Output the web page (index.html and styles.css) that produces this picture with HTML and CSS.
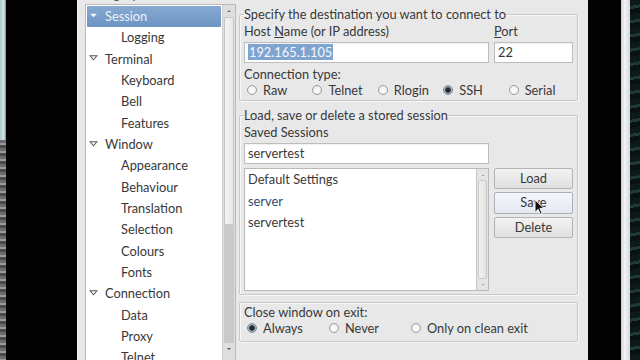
FILE: index.html
```html
<!DOCTYPE html>
<html>
<head>
<meta charset="utf-8">
<link rel="stylesheet" href="styles.css">
</head>
<body>
<div class="screen">
  <div class="desk-left"><div class="desk-left-top"></div><div class="desk-left-bottom"></div></div>
  <div class="black-gap left"></div>
  <div class="window">
    <div class="left-col">
      <div class="cat-label">Category:</div>
      <div class="tree">
        <ul class="tree-list">
          <li class="row top sel"><svg class="exp" viewBox="0 0 8 8"><path d="M1 2.5 L7 2.5 L4 5.5 Z" fill="#f4f7fb"/></svg>Session</li>
          <li class="row child">Logging</li>
          <li class="row top"><svg class="exp" viewBox="0 0 8 8"><path d="M1 2.5 L7 2.5 L4 6 Z" fill="none" stroke="#555" stroke-width="0.9"/></svg>Terminal</li>
          <li class="row child">Keyboard</li>
          <li class="row child">Bell</li>
          <li class="row child">Features</li>
          <li class="row top"><svg class="exp" viewBox="0 0 8 8"><path d="M1 2.5 L7 2.5 L4 6 Z" fill="none" stroke="#555" stroke-width="0.9"/></svg>Window</li>
          <li class="row child">Appearance</li>
          <li class="row child">Behaviour</li>
          <li class="row child">Translation</li>
          <li class="row child">Selection</li>
          <li class="row child">Colours</li>
          <li class="row child">Fonts</li>
          <li class="row top"><svg class="exp" viewBox="0 0 8 8"><path d="M1 2.5 L7 2.5 L4 6 Z" fill="none" stroke="#555" stroke-width="0.9"/></svg>Connection</li>
          <li class="row child">Data</li>
          <li class="row child">Proxy</li>
          <li class="row child">Telnet</li>
        </ul>
        <div class="vscroll tree-scroll">
          <div class="sb-arrow"><svg viewBox="0 0 8 8"><path d="M2 5 L6 5 L4 3 Z" fill="#777"/></svg></div>
          <div class="sb-thumb"></div>
          <div class="sb-track"></div>
          <div class="sb-arrow"><svg viewBox="0 0 8 8"><path d="M2 3 L6 3 L4 5 Z" fill="#555"/></svg></div>
        </div>
      </div>
    </div>

    <div class="right-col">
      <fieldset class="frame f1">
        <legend>Specify the destination you want to connect to</legend>
        <div class="host-row">
          <div class="field host">
            <div class="lbl">Host <u>N</u>ame (or IP address)</div>
            <div class="input"><span class="selected">192.165.1.105</span></div>
          </div>
          <div class="field port">
            <div class="lbl"><u>P</u>ort</div>
            <div class="input">22</div>
          </div>
        </div>
        <div class="lbl conn">Connection type:</div>
        <div class="radios five">
          <div class="radio"><span class="dot"></span>Raw</div>
          <div class="radio"><span class="dot"></span>Telnet</div>
          <div class="radio"><span class="dot"></span>Rlogin</div>
          <div class="radio"><span class="dot on"></span>SSH</div>
          <div class="radio"><span class="dot"></span>Serial</div>
        </div>
      </fieldset>

      <fieldset class="frame f2">
        <legend>Load, save or delete a stored session</legend>
        <div class="lbl saved">Saved Sessions</div>
        <div class="input session-input">servertest</div>
        <div class="sessions-row">
          <div class="listbox">
            <ul class="list">
              <li>Default Settings</li>
              <li class="hot">server</li>
              <li>servertest</li>
            </ul>
            <div class="vscroll list-scroll">
              <div class="sb-arrow"><svg viewBox="0 0 8 8"><path d="M2.5 5 L5.5 5 L4 3.5 Z" fill="#999"/></svg></div>
              <div class="sb-thumb"></div>
              <div class="sb-arrow"><svg viewBox="0 0 8 8"><path d="M2.5 3 L5.5 3 L4 4.5 Z" fill="#999"/></svg></div>
            </div>
          </div>
          <div class="buttons">
            <div class="btn">Load</div>
            <div class="btn hover">Save</div>
            <div class="btn">Delete</div>
          </div>
        </div>
      </fieldset>

      <div class="frame f3">
        <div class="lbl">Close window on exit:</div>
        <div class="radios three">
          <div class="radio"><span class="dot on"></span>Always</div>
          <div class="radio"><span class="dot"></span>Never</div>
          <div class="radio"><span class="dot"></span>Only on clean exit</div>
        </div>
      </div>
    </div>
  </div>
  <div class="black-gap right"></div>
  <div class="desk-right"><div class="desk-right-light"></div><div class="desk-right-dark"></div></div>

  <svg class="cursor" viewBox="0 0 12 19" width="11" height="17">
    <path d="M1 1 L1 15 L4.5 11.5 L7 17 L9 16 L6.5 10.5 L11 10.5 Z" fill="#111" stroke="#fff" stroke-width="1"/>
  </svg>
</div>
</body>
</html>
```

FILE: styles.css
```css
* { box-sizing: border-box; }
html, body { margin: 0; padding: 0; }
body {
  width: 640px;
  height: 360px;
  overflow: hidden;
  background: #000;
  font-family: Lato, "Open Sans", "DejaVu Sans", sans-serif;
  font-size: 12.8px;
  letter-spacing: 0;
  color: #383838;
}
.screen {
  position: relative;
  display: flex;
  width: 640px;
  height: 360px;
  overflow: hidden;
}

/* desktop edges */
.desk-left { width: 6px; display: flex; flex-direction: column; }
.desk-left-top { height: 140px; background: linear-gradient(90deg, #a9c9cc, #d4e8ea 60%, #7d8f90); }
.desk-left-bottom { flex: 1; background: repeating-linear-gradient(180deg, #6c6c6c 0 3px, #9a9a9a 3px 5px, #4a4a4a 5px 8px); }
.black-gap.left { width: 71px; background: #030303; }
.black-gap.right { width: 33px; background: #030303; }
.desk-right { flex: 1; display: flex; }
.desk-right-light { width: 9px; background: linear-gradient(90deg, #c9cdd0, #f2f4f5 40%, #d6dadc); }
.desk-right-dark { flex: 1; background: repeating-linear-gradient(170deg, #0d1a1a 0 6px, #1f3838 6px 9px, #081212 9px 14px); }

/* window */
.window {
  width: 511px;
  background: #e8e8e8;
  display: flex;
  border-left: 1px solid #f4f4f4;
}
.left-col {
  width: 159px;
  padding-left: 7px;
  margin-top: -12px;
  display: flex;
  flex-direction: column;
}
.cat-label {
  flex: none;
  height: 16px;
  line-height: 12px;
  color: #555;
  padding-left: 2px;
}
.tree {
  flex: none;
  display: flex;
  border: 1px solid #b9b9b9;
  background: #fff;
  width: 151px;
  height: 360px;
}
.tree-list {
  list-style: none;
  margin: 0;
  padding: 1px 0 0 0;
  width: 136px;
  flex: none;
}
.row {
  height: 21.33px;
  line-height: 21px;
  display: flex;
  align-items: center;
  white-space: nowrap;
}
.row.top { padding-left: 3px; }
.row.child { padding-left: 35px; }
.exp { width: 9px; height: 9px; margin-right: 7px; margin-top: -3px; }
.row.sel {
  background: linear-gradient(180deg, #86a9d1, #6c94c3);
  color: #eef3f9;
  margin: 0 1px 0 1px;
  padding-left: 2px;
  border-radius: 1px;
}

.vscroll {
  display: flex;
  flex-direction: column;
  background: #dedede;
  border-left: 1px solid #cfcfcf;
}
.tree-scroll { width: 13px; }
.sb-arrow { flex: none; height: 12px; display: flex; align-items: center; justify-content: center; }
.sb-arrow svg { width: 8px; height: 8px; }
.tree-scroll .sb-thumb {
  flex: none;
  height: 208px;
  margin: 0 1px;
  background: linear-gradient(90deg, #f3f3f3, #e7e7e7);
  border: 1px solid #c6c6c6;
  border-radius: 2px;
}
.tree-scroll .sb-track { flex: none; height: 118px; background: #c9c9c9; margin: 0 1px; }

/* right column */
.right-col {
  width: 339px;
  margin-left: 2px;
  display: flex;
  flex-direction: column;
  padding-top: 6px;
}
.frame {
  flex: none;
  margin: 0;
  border: 1px solid #c8c8c8;
  box-shadow: inset 1px 1px 0 #f8f8f8, 1px 1px 0 #f8f8f8;
  border-radius: 2px;
  padding: 0 3px 0 4px;
  min-width: 0;
}
legend {
  padding: 0;
  line-height: 16px;
  height: 16px;
  color: #383838;
}
.lbl { line-height: 14px; height: 14px; white-space: nowrap; }
.host-row { display: flex; gap: 5px; margin-top: 2px; }
.field .lbl { margin-bottom: 4px; }
.field.host { width: 245px; }
.field.port { width: 79px; }
.input {
  height: 21px;
  background: #fff;
  border: 1px solid #bdbdbd;
  box-shadow: inset 0 1px 1px rgba(0,0,0,0.06);
  line-height: 19px;
  padding-left: 3px;
  white-space: nowrap;
  overflow: hidden;
}
.selected { background: #7fa4cf; color: #f4f7fb; padding: 0 1px; }
.lbl.conn { margin-top: 4px; }
.radios { display: flex; height: 16px; line-height: 16px; }
.radios.five { margin-top: 1px; margin-bottom: 2px; margin-left: 3px; }
.radios.five .radio { width: 66px; }
.radios.three { margin-left: 3px; }
.radios.three .radio { width: 82px; }
.radio { display: flex; align-items: center; white-space: nowrap; }
.dot {
  width: 10px;
  height: 10px;
  border-radius: 50%;
  border: 1px solid #9a9a9a;
  background: radial-gradient(circle at 50% 60%, #ffffff, #e6e6e6);
  margin-right: 6px;
  flex: none;
}
.dot.on {
  background: radial-gradient(circle, #2b2b2b 0 2.4px, #8aa0b8 3px, #d2dae3 5px);
  border-color: #7f8b98;
}

.f2 { margin-top: 6px; padding-bottom: 3px; }
.lbl.saved { margin-top: 2px; }
.session-input { margin-top: 4px; width: 245px; }
.sessions-row { display: flex; gap: 5px; margin-top: 4px; }
.listbox {
  display: flex;
  width: 245px;
  height: 123px;
  border: 1px solid #b9b9b9;
  background: #fff;
}
.list { list-style: none; margin: 0; padding: 0 0 0 3px; width: 231px; flex: none; }
.list li { height: 21.5px; line-height: 21px; }
.list li.hot { color: #2d4d72; }
.list-scroll { width: 12px; background: #e4e4e4; border-left: 1px solid #c4c4c4; }
.list-scroll .sb-thumb {
  flex: 1;
  margin: 0 1px;
  background: linear-gradient(90deg, #f1f1f1, #e2e2e2);
  border: 1px solid #c9c9c9;
  border-radius: 2px;
}
.list-scroll .sb-arrow { height: 11px; }
.buttons { display: flex; flex-direction: column; gap: 3px; width: 79px; }
.btn {
  height: 21px;
  line-height: 19px;
  text-align: center;
  border: 1px solid #b4b4b4;
  border-radius: 2px;
  background: linear-gradient(180deg, #f2f2f2, #e0e0e0);
  color: #383838;
}
.btn.hover {
  height: 22px;
  background: linear-gradient(180deg, #f4f6fb, #e4e8f1);
  border-color: #aab0bb;
}
.f3 {
  margin-top: 7px;
  padding-top: 1px;
  padding-bottom: 5px;
}
.f3 .lbl { line-height: 16px; height: 16px; }

.cursor {
  position: absolute;
  left: 534px;
  top: 199px;
}
```
